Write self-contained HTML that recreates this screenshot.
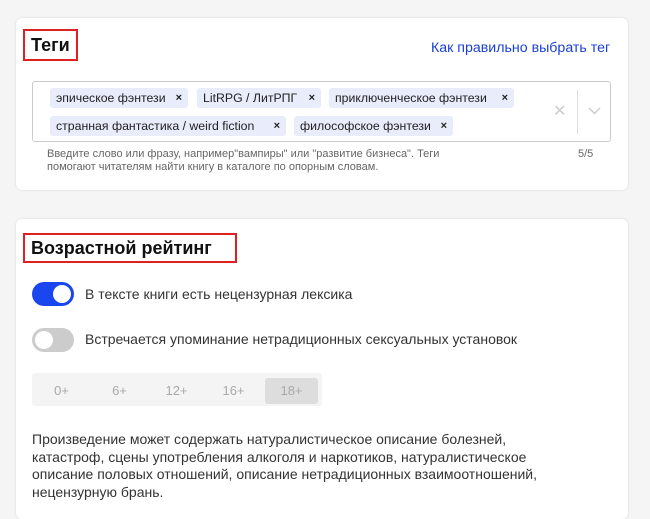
<!DOCTYPE html>
<html><head><meta charset="utf-8"><style>
*{box-sizing:border-box;margin:0;padding:0}
body{width:650px;height:502px;overflow:hidden;background:#f5f5f5;font-family:"Liberation Sans","DejaVu Sans",sans-serif;color:#111;position:relative}
.card{position:absolute;left:16px;width:612px;background:#fff;border-radius:6px;box-shadow:0 0 2px rgba(0,0,0,.15)}
.abs{position:absolute;white-space:nowrap}
.tag{position:absolute;height:20px;background:#e8ecfb;border-radius:3px;font-size:12.3px;line-height:20px;padding-left:6px;color:#222}
.tag b{position:absolute;right:6px;top:0;font-size:11px}
.tog{position:absolute;left:32px;width:42px;height:24px;border-radius:12px}
.tog i{position:absolute;top:3px;width:18px;height:18px;border-radius:50%;background:#fff}
.seg{position:absolute;font-size:13px;color:#aaa;text-align:center;line-height:26px;width:53px;top:378px;height:26px}
</style></head><body>
<div class="card" style="top:18px;height:172px"></div>
<div class="abs" style="left:23px;top:29px;width:55px;height:32px;border:2px solid #e02020"></div>
<div class="abs" style="left:31px;top:35px;font-size:18px;font-weight:bold">Теги</div>
<div class="abs" style="left:431px;top:40px;font-size:14.2px;color:#1a3fd6">Как правильно выбрать тег</div>
<div class="abs" style="left:32px;top:81px;width:579px;height:61px;border:1px solid #ccc;border-radius:3px"></div>
<div class="tag" style="left:50px;top:88px;width:138px">эпическое фэнтези<b>×</b></div>
<div class="tag" style="left:197px;top:88px;width:124px">LitRPG / ЛитРПГ<b>×</b></div>
<div class="tag" style="left:329px;top:88px;width:185px">приключенческое фэнтези<b>×</b></div>
<div class="tag" style="left:50px;top:116px;width:236px">странная фантастика / weird fiction<b>×</b></div>
<div class="tag" style="left:294px;top:116px;width:159px">философское фэнтези<b>×</b></div>
<div class="abs" style="left:553px;top:101px;font-size:16px;color:#ccc">✕</div>
<div class="abs" style="left:577px;top:90px;width:1px;height:44px;background:#ddd"></div>
<svg class="abs" style="left:588px;top:107px" width="13" height="8"><path d="M1 1l5.5 5.5L12 1" stroke="#ccc" stroke-width="1.5" fill="none"/></svg>
<div class="abs" style="left:47px;top:148px;font-size:11px;color:#666;line-height:13px;white-space:normal;width:425px">Введите слово или фразу, например"вампиры" или "развитие бизнеса". Теги помогают читателям найти книгу в каталоге по опорным словам.</div>
<div class="abs" style="left:578px;top:148px;font-size:11px;color:#666">5/5</div>

<div class="card" style="top:219px;height:300px"></div>
<div class="abs" style="left:23px;top:233px;width:214px;height:30px;border:2px solid #e02020"></div>
<div class="abs" style="left:31px;top:238px;font-size:18px;font-weight:bold">Возрастной рейтинг</div>
<div class="tog" style="top:282px;background:#1a46f0"><i style="left:21px"></i></div>
<div class="abs" style="left:85px;top:286px;font-size:14px;color:#333">В тексте книги есть нецензурная лексика</div>
<div class="tog" style="top:328px;background:#ccc"><i style="left:3px"></i></div>
<div class="abs" style="left:85px;top:331px;font-size:14px;color:#333">Встречается упоминание нетрадиционных сексуальных установок</div>
<div class="abs" style="left:32px;top:373px;width:290px;height:33px;background:#f4f4f4;border-radius:3px"></div>
<div class="seg" style="left:35px">0+</div>
<div class="seg" style="left:93px">6+</div>
<div class="seg" style="left:150px">12+</div>
<div class="seg" style="left:207px">16+</div>
<div class="seg" style="left:265px;background:#ddd;border-radius:3px">18+</div>
<div class="abs" style="left:32px;top:431px;font-size:14px;line-height:17.5px;color:#333;white-space:normal;width:510px">Произведение может содержать натуралистическое описание болезней, катастроф, сцены употребления алкоголя и наркотиков, натуралистическое описание половых отношений, описание нетрадиционных взаимоотношений, нецензурную брань.</div>
</body></html>
